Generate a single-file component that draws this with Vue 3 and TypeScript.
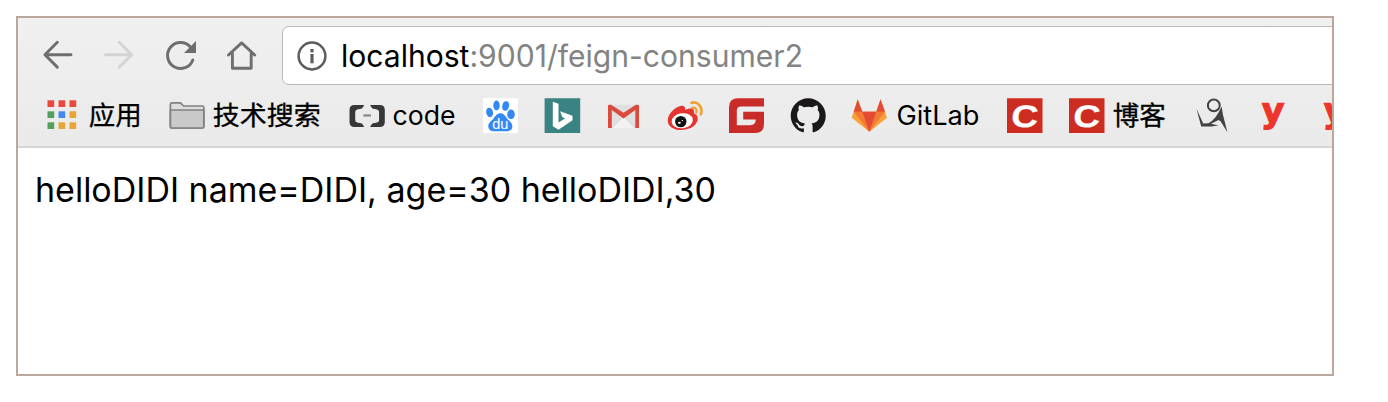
<script setup lang="ts">
interface Bookmark {
  icon: string
  label?: string
  cjk?: boolean
  width: number
  labelWidth?: number
}

const bookmarks: Bookmark[] = [
  { icon: 'apps', label: '应用', cjk: true, width: 98.5, labelWidth: 53 },
  { icon: 'folder', label: '技术搜索', cjk: true, width: 154, labelWidth: 108 },
  { icon: 'code', label: 'code', width: 108.5, labelWidth: 63 },
  { icon: 'baidu', width: 35.5 },
  { icon: 'bing', width: 35.5 },
  { icon: 'gmail', width: 35.5 },
  { icon: 'weibo', width: 35.5 },
  { icon: 'gitee', width: 35.5 },
  { icon: 'github', width: 35.5 },
  { icon: 'gitlab', label: 'GitLab', width: 129, labelWidth: 83 },
  { icon: 'csdn', width: 35.5 },
  { icon: 'csdn', label: '博客', cjk: true, width: 101, labelWidth: 53 },
  { icon: 'figure', width: 35.5 },
  { icon: 'y', width: 35.5 },
  { icon: 'y', width: 35.5 },
]

const appColors = ['#e8493b', '#e8493b', '#e8493b', '#53a05e', '#4389ef', '#e6a534', '#53a05e', '#e6a534', '#e6a534']
</script>

<template>
  <main class="page">
    <section class="window">
      <header class="chrome">
        <div class="toolbar">
          <nav class="nav">
            <svg viewBox="0 0 30 30" class="nav-icon"><path d="M28 13.7H2M14.3 1.3L1.9 13.7L14.3 26.1" /></svg>
            <svg viewBox="0 0 30 30" class="nav-icon disabled"><path d="M1.5 13.7H27.5M15.2 1.3L27.6 13.7L15.2 26.1" /></svg>
            <svg viewBox="0 0 30 30" class="nav-icon"><path d="M26.8 18.9A13 13 0 1 1 24.4 6" /><path d="M30 0V12H18Z" class="solid" /></svg>
            <svg viewBox="0 0 30 30" class="nav-icon"><path d="M1.5 14L14.6 1.9L27.7 14M5.4 12V27.3H24.2V12" /></svg>
          </nav>
          <div class="omnibox">
            <svg viewBox="0 0 30 30" class="info"><circle cx="15" cy="15" r="13.4" /><path d="M13.4 8h3.2v3.2h-3.2zM13.4 13h3.2v9.2h-3.2z" /></svg>
            <svg class="url" width="470" height="40">
              <text x="1" y="31.3" textLength="462" lengthAdjust="spacingAndGlyphs"><tspan class="host">localhost</tspan>:9001/feign-consumer2</text>
            </svg>
          </div>
        </div>
        <div class="bookmarks">
          <div v-for="(b, i) in bookmarks" :key="i" class="bookmark" :style="{ width: b.width + 'px' }">
            <svg class="icon" viewBox="0 0 35.5 36">
              <g v-if="b.icon === 'apps'">
                <rect v-for="(c, n) in appColors" :key="n" :x="3.5 + (n % 3) * 11" :y="2.3 + Math.floor(n / 3) * 11" width="6.7" height="6.7" :fill="c" />
              </g>
              <g v-else-if="b.icon === 'folder'" stroke="#818181" stroke-width="1.7" stroke-linejoin="round">
                <path d="M1.4 28.2V6.5Q1.4 4.9 3 4.9H11.5L14.6 8H33.5Q34.8 8 34.8 9.5V28.5Q34.8 30 33.2 30H3Q1.4 30 1.4 28.2Z" fill="#dedede" />
                <path d="M1.4 12H34.8V28.5Q34.8 30 33.2 30H3Q1.4 30 1.4 28.5Z" fill="#c9c9c9" />
              </g>
              <g v-else-if="b.icon === 'code'">
                <path d="M15.3 7H5.5Q.5 7 .5 12V24Q.5 29 5.5 29H15.3L13 25.4L8.2 24.6Q6.2 24 6.2 22V14Q6.2 12 8.2 11.4L13 10.6ZM21 7H30.8Q35.8 7 35.8 12V24Q35.8 29 30.8 29H21L23.3 25.4L28.1 24.6Q30.1 24 30.1 22V14Q30.1 12 28.1 11.4L23.3 10.6Z" fill="#363836" />
                <path d="M14.3 16.3h7.7v2.3h-7.7z" fill="#8c8c8c" />
              </g>
              <g v-else-if="b.icon === 'baidu'">
                <path d="M0 .2h35v34.8H0z" fill="#fff" />
                <g fill="#3388f6">
                  <ellipse cx="13.5" cy="7.5" rx="3.2" ry="5" />
                  <ellipse cx="22.6" cy="8" rx="3.3" ry="4.8" transform="rotate(12 22.6 8)" />
                  <ellipse cx="6.6" cy="14.4" rx="3.4" ry="4.8" transform="rotate(-12 6.6 14.4)" />
                  <ellipse cx="28" cy="16.4" rx="3.8" ry="4.8" />
                  <path d="M17.5 15.3C21 15.3 22.5 18.5 24.5 21C27 23.5 29.8 25.5 29.3 29C28.8 33.5 24.5 33.5 17.5 33.2C11 33.5 5.8 34 5.3 28.5C5 25 8.5 23 10.5 20.5C12.5 18 14 15.3 17.5 15.3Z" />
                </g>
                <text x="17.2" y="30.6" class="du">du</text>
              </g>
              <g v-else-if="b.icon === 'bing'">
                <path d="M-.4 .2h35.6V35.1H-.4z" fill="#398382" />
                <path d="M7.8 3.7L13.5 5.8V24.4L20 20.5L17.3 19L15 13.3L27.5 17.8V22.2L13.5 31.7L7.8 28.3Z" fill="#fff" />
              </g>
              <g v-else-if="b.icon === 'gmail'">
                <path d="M2 8Q2 6.7 3.5 6.7H31.5Q33 6.7 33 8V30H2Z" fill="#e0e0e0" />
                <path d="M5.5 30L17.4 18.5L29.5 30Z" fill="#f2f2f2" />
                <path d="M6 30L17.5 18.5L29 30" fill="none" stroke="#d0d0d0" stroke-width=".7" />
                <path d="M2 30V8Q2 6.7 3.5 6.7H5L17.5 14.7L30 6.7H31.5Q33 6.7 33 8V30H29.3V12L17.5 20.4L5.8 12V30Z" fill="#da4a3d" />
              </g>
              <g v-else-if="b.icon === 'weibo'">
                <path d="M12.4 8C15.4 7.3 17.5 8.5 17.2 12C21 9.8 27.2 9.3 26 15.5C29 16.5 30.5 19 29.4 22.8C27.6 28.8 20.7 32 13.2 32C5.5 32 -.3 28.2-.3 22.4C-.3 16.5 6.5 9.3 12.4 8Z" fill="#e43430" />
                <ellipse cx="14.2" cy="22.8" rx="10.7" ry="7.5" fill="#fff" transform="rotate(-7 14.2 22.8)" />
                <circle cx="12.8" cy="23.6" r="5.7" fill="#111" />
                <ellipse cx="11.4" cy="24.8" rx="1.4" ry="1.1" fill="#fff" />
                <circle cx="14.3" cy="22.6" r=".7" fill="#fff" />
                <g fill="none" stroke="#f0a23a" stroke-linecap="round">
                  <path d="M23.5 4.8C29.5 2.9 35.2 8.8 32.8 16.4" stroke-width="2.8" />
                  <path d="M24 9.9C27.2 8.9 29.5 11.4 28.3 14.6" stroke-width="2.4" />
                </g>
              </g>
              <path v-else-if="b.icon === 'gitee'" d="M9 .2H35V8.5H12Q7.8 8.5 7.8 12.5V27.2H21Q26.8 27.2 26.8 21.5H14.2V13.7H35V26Q35 35.1 26 35.1H0V9.2Q0 .2 9 .2Z" fill="#c92b28" />
              <path v-else-if="b.icon === 'github'" transform="translate(-.3 .2) scale(2.19)" fill="#1b1918" d="M8 0C3.58 0 0 3.58 0 8c0 3.54 2.29 6.53 5.47 7.59.4.07.55-.17.55-.38 0-.19-.01-.82-.01-1.49-2.01.37-2.53-.49-2.69-.94-.09-.23-.48-.94-.82-1.13-.28-.15-.68-.52-.01-.53.63-.01 1.08.58 1.23.82.72 1.21 1.87.87 2.33.66.07-.52.28-.87.51-1.07-1.78-.2-3.64-.89-3.64-3.95 0-.87.31-1.59.82-2.15-.08-.2-.36-1.02.08-2.12 0 0 .67-.21 2.2.82.64-.18 1.32-.27 2-.27.68 0 1.36.09 2 .27 1.53-1.04 2.2-.82 2.2-.82.44 1.1.16 1.92.08 2.12.51.56.82 1.27.82 2.15 0 3.07-1.87 3.75-3.65 3.95.29.25.54.73.54 1.48 0 1.07-.01 1.93-.01 2.2 0 .21.15.46.55.38A8.013 8.013 0 0016 8c0-4.42-3.58-8-8-8z" />
              <g v-else-if="b.icon === 'gitlab'">
                <path d="M5.7 1.3L10.4 13.7H24.2L28.6 1.3L35 19.7L17.3 33.7L-.3 19.7Z" fill="#f9a23a" />
                <path d="M1.7 13.7H33L17.3 33.7Z" fill="#f47935" />
                <path d="M5.7 1.3L10.4 13.7H1.7ZM28.6 1.3L33 13.7H24.2ZM10.4 13.7H24.2L17.3 33.7Z" fill="#e34c32" />
              </g>
              <g v-else-if="b.icon === 'csdn'">
                <path d="M0 .2h35.5v34.9H0z" fill="#cd2c20" />
                <text class="csdn" transform="translate(3.6 29.4) skewX(-5) scale(1.2 1)">C</text>
              </g>
              <g v-else-if="b.icon === 'figure'" fill="#444240">
                <circle cx="17.8" cy="7.4" r="5.9" fill="none" stroke="#444240" stroke-width="2" />
                <path d="M.5 10.7L7.2 25.5L12.5 25.3Q20 21.5 25.6 8.5L27 17L31.4 34.2L24.6 23.3L22.5 22L15 25.8L22.5 27.4L15 28.5H5.2Z" />
              </g>
              <text v-else-if="b.icon === 'y'" class="y-mark" transform="translate(4 23.8) skewX(-3) scale(1.02 1)">y</text>
            </svg>
            <span v-if="b.label" class="label">
              <svg class="label-svg" :width="b.labelWidth" height="36">
                <text :x="b.cjk ? -0.2 : -0.5" y="27.4" :class="{ cjk: b.cjk }" :textLength="b.labelWidth" lengthAdjust="spacingAndGlyphs">{{ b.label }}</text>
              </svg>
            </span>
          </div>
        </div>
      </header>
      <article class="content">
        <svg class="body-text" width="690" height="50">
          <text x="-1" y="34" textLength="681" lengthAdjust="spacingAndGlyphs">helloDIDI name=DIDI, age=30 helloDIDI,30</text>
        </svg>
      </article>
    </section>
  </main>
</template>

<style>
body {
  margin: 0;
  background: #fff;
}
</style>

<style scoped>
.page {
  box-sizing: border-box;
  width: 1388px;
  height: 402px;
  padding: 16px;
  overflow: hidden;
  background: #fff;
}
.window {
  box-sizing: border-box;
  width: 1318px;
  height: 360px;
  border: 2px solid #bca79f;
  overflow: hidden;
}
.chrome {
  box-sizing: border-box;
  height: 130px;
  padding-top: 8px;
  border-bottom: 2px solid #d6d6d6;
  background: linear-gradient(#f0f0f0, #eaeaea);
}
.toolbar {
  display: flex;
  height: 59px;
}
.nav {
  display: flex;
  flex: none;
  gap: 31.3px;
  box-sizing: border-box;
  width: 264px;
  padding: 15px 0 0 25px;
}
.nav-icon {
  flex: none;
  width: 30px;
  height: 30px;
  overflow: visible;
  fill: none;
  stroke: #6e6e6e;
  stroke-width: 2.9;
  stroke-linecap: round;
  stroke-linejoin: round;
}
.nav-icon .solid {
  fill: #6e6e6e;
  stroke: none;
}
.nav-icon.disabled {
  stroke: #d4d4d4;
}
.omnibox {
  display: flex;
  flex: none;
  align-items: center;
  box-sizing: border-box;
  width: 1070px;
  height: 59px;
  padding-left: 14px;
  border: 1.5px solid #b9b9b9;
  border-radius: 7px;
  background: #fff;
}
.info {
  flex: none;
  width: 30px;
  height: 30px;
  fill: #5c5c5c;
}
.info circle {
  fill: none;
  stroke: #5c5c5c;
  stroke-width: 2.5;
}
.url {
  flex: none;
  margin-left: 13px;
  overflow: visible;
  fill: #838383;
  font: 30.5px Inter, sans-serif;
}
.host {
  fill: #000;
}
.bookmarks {
  display: flex;
  gap: 26px;
  padding: 13px 0 0 26px;
}
.bookmark {
  display: flex;
  flex: none;
  gap: 9px;
}
.icon {
  flex: none;
  width: 35.5px;
  height: 36px;
  overflow: visible;
}
.label {
  height: 36px;
}
.label-svg {
  display: block;
  overflow: visible;
  font: 26.5px Inter, sans-serif;
}
.label-svg .cjk {
  font: 26.5px "Noto Sans CJK SC", sans-serif;
  stroke: #000;
  stroke-width: 0.3;
}
.du {
  fill: #fff;
  font: 14.5px "Liberation Sans", sans-serif;
  text-anchor: middle;
}
.csdn {
  fill: #fff;
  stroke: #fff;
  stroke-width: 0.3;
  font: bold 31px "Liberation Sans", sans-serif;
}
.y-mark {
  fill: #ee3529;
  stroke: #ee3529;
  stroke-width: 1.2;
  font: bold 34px "DejaVu Sans", sans-serif;
}
.content {
  padding: 7px 0 0 18px;
}
.body-text {
  display: block;
  overflow: visible;
  font: 34.5px Inter, sans-serif;
}
.body-text text {
  transform: translateY(13px);
}
</style>
